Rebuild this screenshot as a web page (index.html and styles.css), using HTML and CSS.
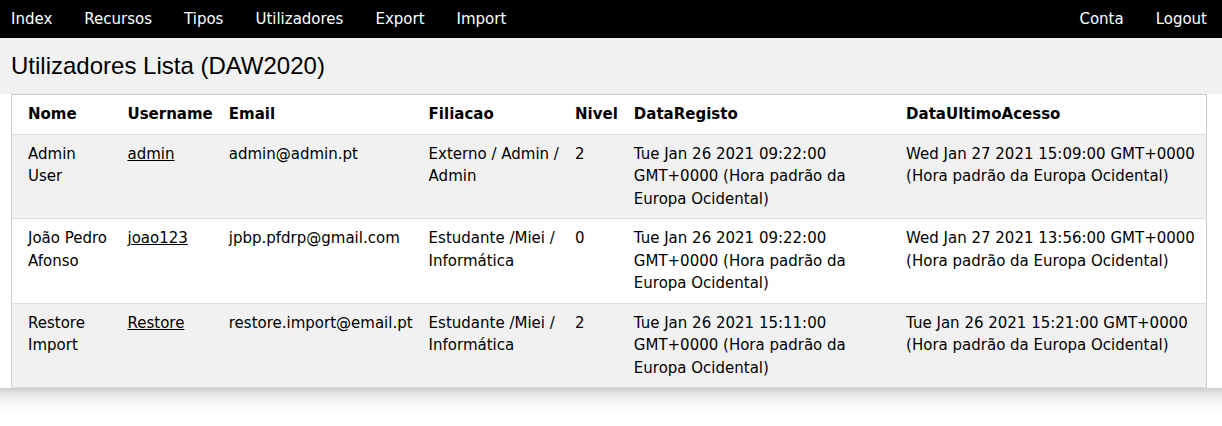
FILE: index.html
```html
<!DOCTYPE html>
<html lang="pt">
<head>
<meta charset="utf-8">
<title>Utilizadores Lista</title>
<link rel="stylesheet" href="styles.css">
</head>
<body>
<nav class="bar">
  <div class="bar-group">
    <a class="bar-item" href="#">Index</a>
    <a class="bar-item" href="#">Recursos</a>
    <a class="bar-item" href="#">Tipos</a>
    <a class="bar-item" href="#">Utilizadores</a>
    <a class="bar-item" href="#">Export</a>
    <a class="bar-item" href="#">Import</a>
  </div>
  <div class="bar-group">
    <a class="bar-item" href="#">Conta</a>
    <a class="bar-item" href="#">Logout</a>
  </div>
</nav>
<div class="card">
  <header class="head">
    <h3 class="title">Utilizadores Lista (DAW2020)</h3>
  </header>
  <div class="content">
    <table class="table">
      <tr>
        <th>Nome</th><th>Username</th><th>Email</th><th>Filiacao</th><th>Nivel</th><th>DataRegisto</th><th>DataUltimoAcesso</th>
      </tr>
      <tr>
        <td>Admin User</td><td><a href="#">admin</a></td><td>admin@admin.pt</td><td>Externo / Admin / Admin</td><td>2</td><td>Tue Jan 26 2021 09:22:00 GMT+0000 (Hora padrão da Europa Ocidental)</td><td>Wed Jan 27 2021 15:09:00 GMT+0000 (Hora padrão da Europa Ocidental)</td>
      </tr>
      <tr>
        <td>João Pedro Afonso</td><td><a href="#">joao123</a></td><td>jpbp.pfdrp@gmail.com</td><td>Estudante /Miei / Informática</td><td>0</td><td>Tue Jan 26 2021 09:22:00 GMT+0000 (Hora padrão da Europa Ocidental)</td><td>Wed Jan 27 2021 13:56:00 GMT+0000 (Hora padrão da Europa Ocidental)</td>
      </tr>
      <tr>
        <td>Restore Import</td><td><a href="#">Restore</a></td><td>restore.import@email.pt</td><td>Estudante /Miei / Informática</td><td>2</td><td>Tue Jan 26 2021 15:11:00 GMT+0000 (Hora padrão da Europa Ocidental)</td><td>Tue Jan 26 2021 15:21:00 GMT+0000 (Hora padrão da Europa Ocidental)</td>
      </tr>
    </table>
  </div>
  <div class="card-shadow"></div>
</div>
</body>
</html>
```
FILE: styles.css
```css
html, body {
  margin: 0;
  padding: 0;
}
body {
  font-family: "DejaVu Sans", Verdana, sans-serif;
  font-size: 15px;
  line-height: 1.5;
  color: #000;
  background: #fff;
}
.bar {
  display: flex;
  justify-content: space-between;
  background: #000;
  color: #fff;
  padding: 0 15px 0 11px;
}
.bar-group {
  display: flex;
  gap: 32px;
}
.bar-item {
  color: #fff;
  text-decoration: none;
  padding: 8px 0;
  line-height: 22px;
}
.head {
  background: #f1f1f1;
  padding: 0.01em 15px 0.01em 11px;
}
.title {
  font-family: "Segoe UI", Arial, "Liberation Sans", sans-serif;
  font-weight: 400;
  font-size: 24px;
  line-height: 36px;
  margin: 10px 0;
}
.content {
  padding: 0 15px 0 11px;
}
.card-shadow {
  height: 24px;
  background: linear-gradient(to bottom, rgba(0,0,0,0.19) 0%, rgba(0,0,0,0.09) 30%, rgba(0,0,0,0.03) 65%, rgba(0,0,0,0) 100%);
}
.table {
  width: 100%;
  border-collapse: collapse;
  border-spacing: 0;
  border: 1px solid #ccc;
}
.table tr {
  border-bottom: 1px solid #ddd;
  background: #fff;
}
.table tr:nth-child(even) {
  background: #f1f1f1;
}
.table th, .table td {
  padding: 8px 8px;
  text-align: left;
  vertical-align: top;
}
.table th:first-child, .table td:first-child {
  padding-left: 16px;
}
.table a {
  color: inherit;
}
```
